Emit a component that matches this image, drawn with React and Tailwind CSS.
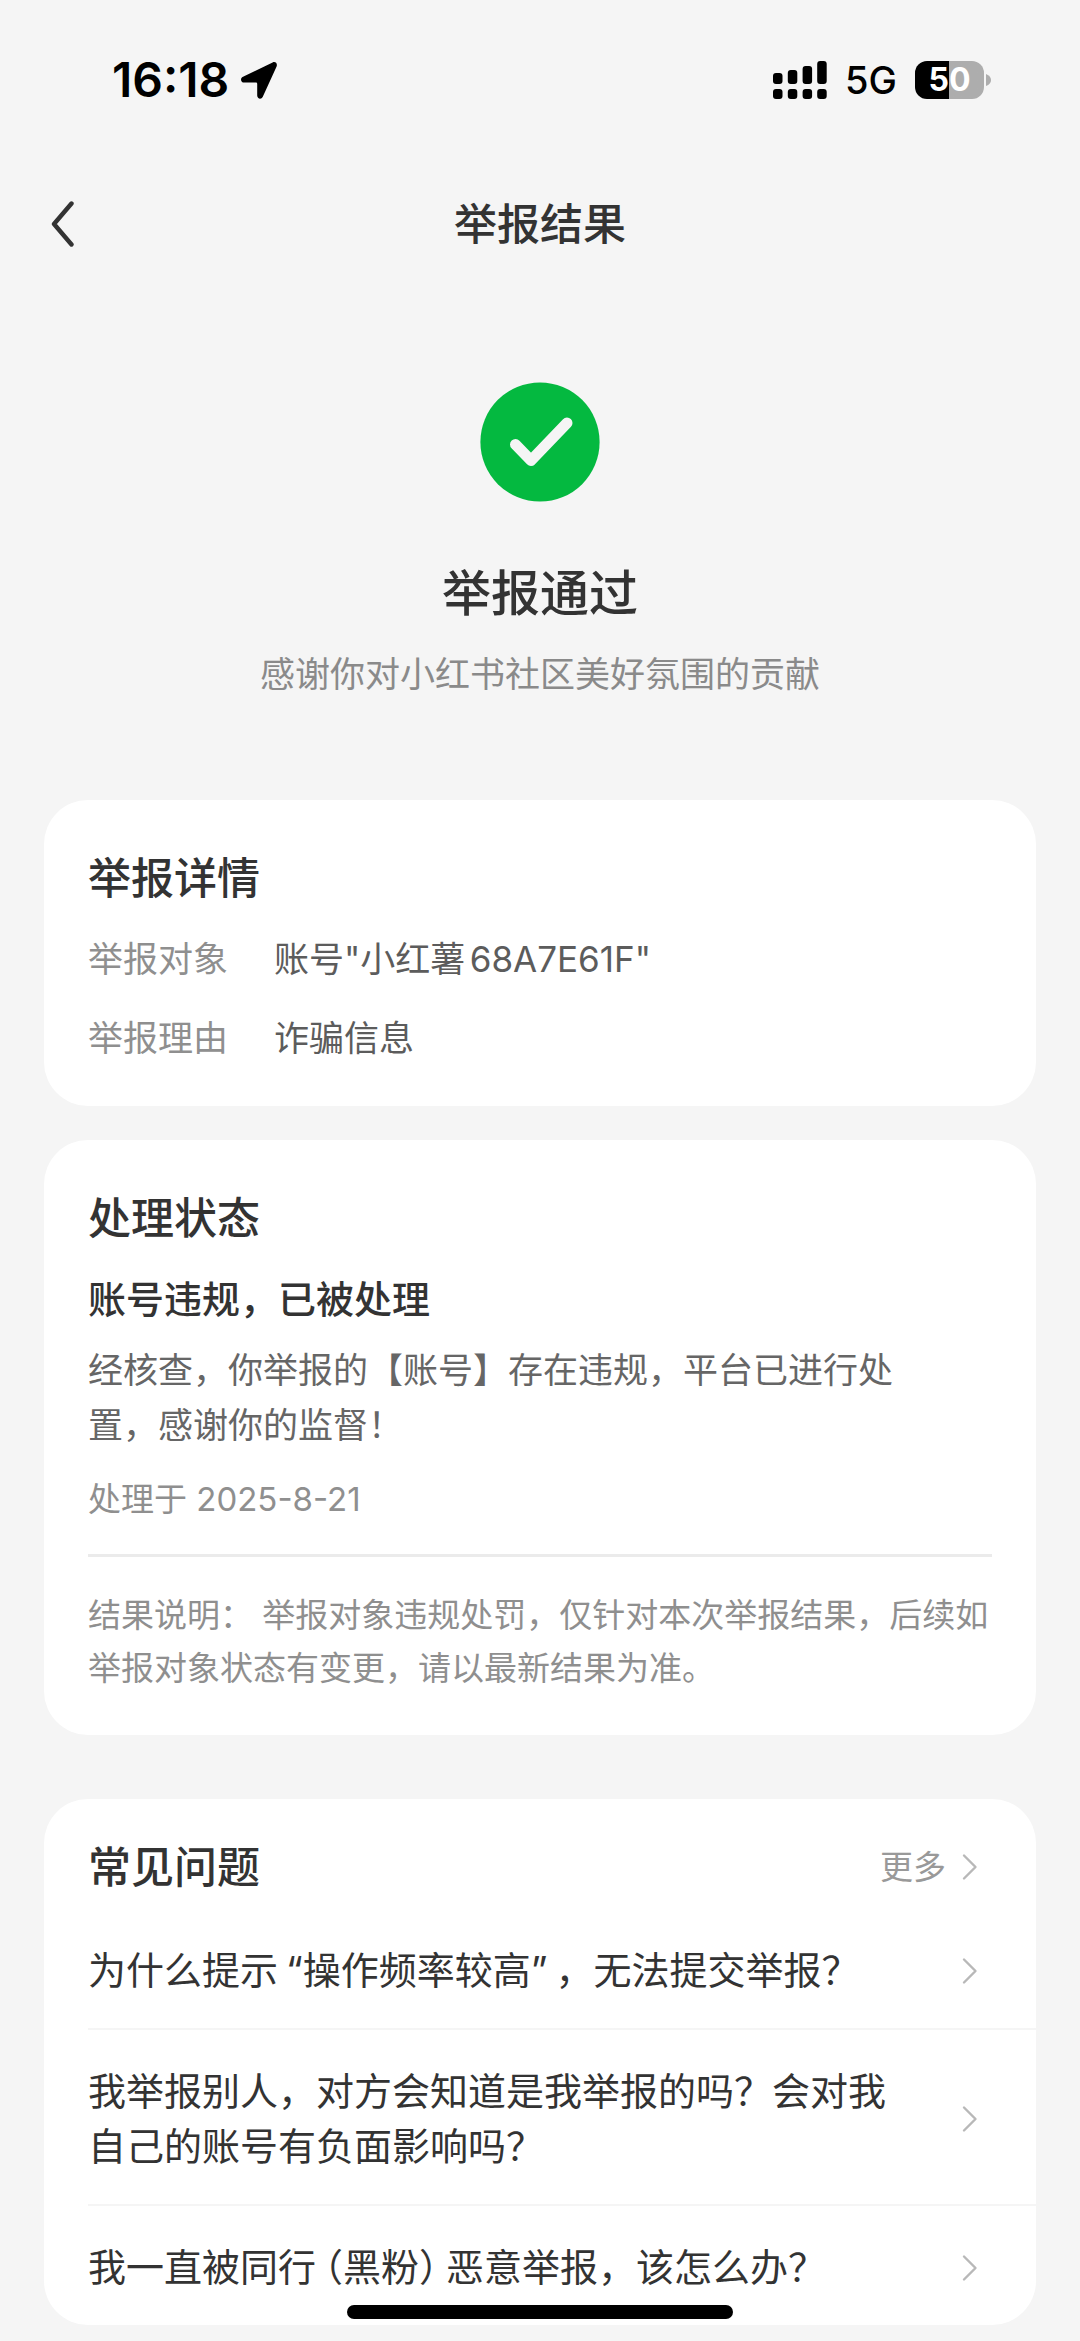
const FAQS = [
  ["为什么提示", { open: "“" }, "操作频率较高", { close: "”" }, "，无法提交举报？"],
  ["我举报别人，对方会知道是我举报的吗？会对我自己的账号有负面影响吗？"],
  ["我一直被同行", { open: "（" }, "黑粉", { close: "）" }, "恶意举报，该怎么办？"],
];

const DETAILS = [
  { label: "举报对象", value: '账号"小红薯68A7E61F"' },
  { label: "举报理由", value: "诈骗信息" },
];

// Brackets use their half-width form with a little air on the outer side
function Open({ children }) {
  return <span className="pl-2 [font-feature-settings:'halt']">{children}</span>;
}

function Close({ children }) {
  return <span className="pr-2 [font-feature-settings:'halt']">{children}</span>;
}

function RichText({ parts }) {
  return parts.map((part, i) => {
    if (typeof part === "string") return part;
    return part.open ? <Open key={i}>{part.open}</Open> : <Close key={i}>{part.close}</Close>;
  });
}

function ChevronIcon() {
  return (
    <svg viewBox="0 0 16 28" className="h-7 w-4 shrink-0" fill="none" aria-hidden="true">
      <path d="M2 2.5 L13.5 14 L2 25.5" stroke="#b8b8b8" strokeWidth="2.4" strokeLinecap="round" strokeLinejoin="round" />
    </svg>
  );
}

function LocationIcon() {
  return (
    <svg viewBox="0 0 36 37" className="h-[37px] w-9" aria-hidden="true">
      <path
        d="M31.6 .4 C34.5 -.7 36.7 1.4 35.6 4.4 L21.8 34.8 C20.4 37.9 16.2 37 16.2 33.6 L16.2 21.8 Q16.2 20.6 15 20.6 L3.2 20.6 C-.3 20.6 -1.2 16.3 2 14.8 Z"
        fill="#000"
      />
    </svg>
  );
}

function SignalIcon() {
  return (
    <svg viewBox="0 0 54 38" className="h-[38px] w-[54px]" aria-hidden="true">
      <rect x="0" y="12" width="9.5" height="11" rx="3" />
      <rect x="14.8" y="9" width="9.5" height="14" rx="3" />
      <rect x="29.6" y="5" width="9.5" height="18" rx="3" />
      <rect x="44.2" y="0" width="9.5" height="23" rx="3" />
      <rect x="0" y="28" width="9.5" height="10" rx="3" />
      <rect x="14.8" y="28" width="9.5" height="10" rx="3" />
      <rect x="29.6" y="28" width="9.5" height="10" rx="3" />
      <rect x="44.2" y="28" width="9.5" height="10" rx="3" />
    </svg>
  );
}

function Battery() {
  return (
    <div className="flex items-center gap-[2px]">
      <div className="flex h-[38px] w-[69px] items-center justify-center rounded-[12px] bg-linear-to-r from-black from-50% to-[#adadad] to-50% text-[32px] leading-none font-bold text-white">
        50
      </div>
      <svg viewBox="0 0 5 12" className="h-3 w-[5px]" aria-hidden="true">
        <path d="M0 0 Q5 2 5 6 Q5 10 0 12 Z" fill="#adadad" />
      </svg>
    </div>
  );
}

function StatusBar() {
  return (
    <div className="flex h-40 items-center justify-between pr-[89px] pl-28 text-black">
      <div className="flex items-center gap-3">
        <span className="text-[48px] leading-none font-semibold">16:18</span>
        <LocationIcon />
      </div>
      <div className="flex items-center gap-[18px]">
        <SignalIcon />
        <span className="text-[38px] leading-none font-medium">5G</span>
        <Battery />
      </div>
    </div>
  );
}

function NavBar() {
  return (
    <header className="grid h-32 grid-cols-[1fr_auto_1fr] items-center px-11">
      <button type="button" aria-label="返回" className="justify-self-start px-1.5">
        <svg viewBox="0 0 24 48" className="h-12 w-6" fill="none" aria-hidden="true">
          <path d="M21.5 3.5 L4 24 L21.5 44.5" stroke="#333" strokeWidth="4.4" strokeLinecap="round" strokeLinejoin="round" />
        </svg>
      </button>
      <h1 className="text-[43px] leading-[60px] font-medium">举报结果</h1>
    </header>
  );
}

function Result() {
  return (
    <section className="flex flex-col items-center pt-[94px] text-center">
      <svg viewBox="0 0 120 120" className="size-[120px]" fill="none" aria-hidden="true">
        <circle cx="60" cy="60" r="59.6" fill="#04b940" />
        <path d="M35.5 62.5 L51 78.5 L87 41" stroke="#f5f5f5" strokeWidth="11" strokeLinecap="round" strokeLinejoin="round" />
      </svg>
      <h2 className="mt-15 text-[49px] leading-[64px] font-medium">举报通过</h2>
      <p className="mt-6 text-[35px] leading-[48px] text-[#8a8a8a]">感谢你对小红书社区美好氛围的贡献</p>
    </section>
  );
}

function Card({ title, children }) {
  return (
    <section className="rounded-[44px] bg-white px-11 pt-12 pb-10">
      <h2 className="text-[43px] leading-[60px] font-medium">{title}</h2>
      {children}
    </section>
  );
}

export default function App() {
  return (
    <div
      lang="zh-CN"
      className="min-h-screen bg-[#f5f5f5] pb-3.5 font-['Inter','Noto_Sans_CJK_SC',sans-serif] text-[#333]"
    >
      <StatusBar />
      <NavBar />

      <main className="px-11">
        <Result />

        <div className="mt-[102px] flex flex-col gap-[34px]">
          <Card title="举报详情">
            <dl className="mt-6 flex flex-col gap-6 text-[35px] leading-[55px] [text-autospace:normal]">
              {DETAILS.map((row) => (
                <div key={row.label} className="flex gap-[46px]">
                  <dt className="text-[#8f8f8f]">{row.label}</dt>
                  <dd className="text-[#5c5c5c]">{row.value}</dd>
                </div>
              ))}
            </dl>
          </Card>

          <Card title="处理状态">
            <h3 className="mt-6 text-[38px] leading-[55px] font-medium">账号违规，已被处理</h3>
            <p className="mt-4 mr-20 text-[35px] leading-[55px] text-[#666]">
              经核查，你举报的【账号】存在违规，平台已进行处置，感谢你的监督！
            </p>
            <p className="mt-5 text-[33px] leading-[53px] text-[#8f8f8f]">处理于 2025-8-21</p>
            <p className="mt-7 border-t-3 border-[#ebebeb] pt-8 text-[33px] leading-[53px] text-[#8f8f8f]">
              结果说明： 举报对象违规处罚，仅针对本次举报结果，后续如举报对象状态有变更，请以最新结果为准。
            </p>
          </Card>
        </div>

        <section className="mt-16 rounded-[44px] bg-white pl-11">
          <div className="flex items-center justify-between pt-[38px] pr-[58px]">
            <h2 className="text-[43px] leading-[60px] font-medium">常见问题</h2>
            <a href="#more" className="flex items-center gap-4 text-[33px] leading-[53px] text-[#999]">
              更多
              <ChevronIcon />
            </a>
          </div>
          <ul className="mt-3 divide-y-2 divide-[#f5f5f5]">
            {FAQS.map((parts, i) => (
              <li key={i}>
                <a href={`#faq-${i + 1}`} className="flex items-center gap-14 pt-[34px] pr-[58px] pb-[30px] text-[38px] leading-[55px]">
                  <span className="flex-1">
                    <RichText parts={parts} />
                  </span>
                  <ChevronIcon />
                </a>
              </li>
            ))}
          </ul>
        </section>
      </main>

      {/* Home indicator */}
      <div className="fixed bottom-[22px] left-1/2 h-3.5 w-[386px] -translate-x-1/2 rounded-full bg-black" />
    </div>
  );
}
